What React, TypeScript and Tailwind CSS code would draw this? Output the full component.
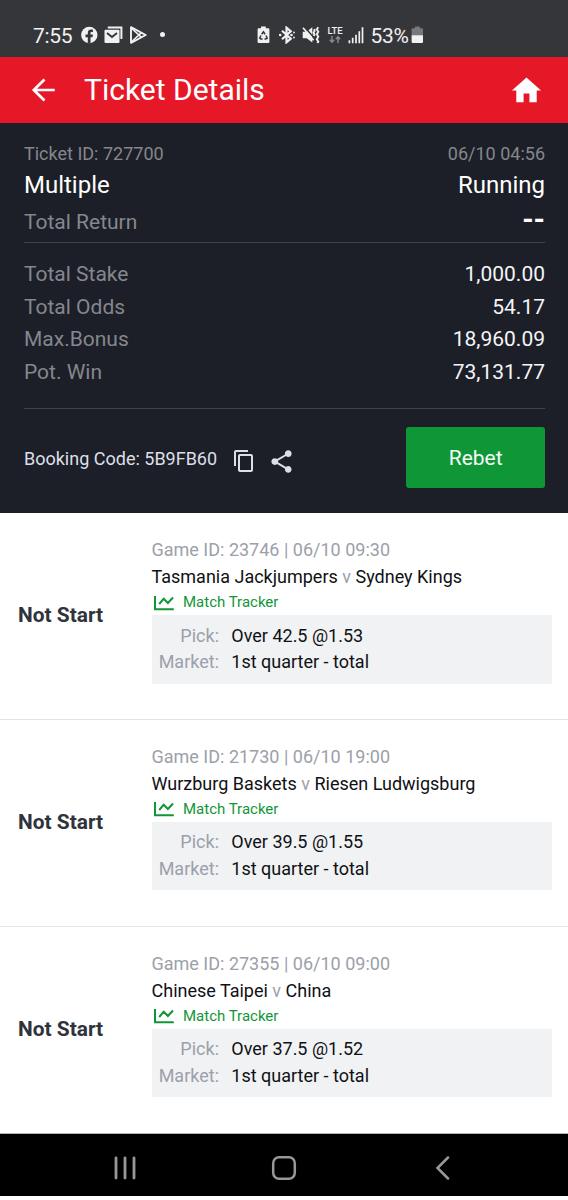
import React from "react";

type Game = {
  id: string;
  time: string;
  home: string;
  away: string;
  pick: string;
  market: string;
};

const games: Game[] = [
  { id: "23746", time: "06/10 09:30", home: "Tasmania Jackjumpers", away: "Sydney Kings", pick: "Over 42.5 @1.53", market: "1st quarter - total" },
  { id: "21730", time: "06/10 19:00", home: "Wurzburg Baskets", away: "Riesen Ludwigsburg", pick: "Over 39.5 @1.55", market: "1st quarter - total" },
  { id: "27355", time: "06/10 09:00", home: "Chinese Taipei", away: "China", pick: "Over 37.5 @1.52", market: "1st quarter - total" },
];

const totals = [
  ["Total Stake", "1,000.00"],
  ["Total Odds", "54.17"],
  ["Max.Bonus", "18,960.09"],
  ["Pot. Win", "73,131.77"],
];

function StatusBar() {
  return (
    <div className="flex h-[57px] items-end bg-[#353639] pb-[9px] pl-[33px] text-[21px] leading-[24px] text-[#f1f1f2]">
      <span className="w-[48px] tracking-[-0.3px]">7:55</span>
      <svg className="my-[4px] h-[18px] w-[17px] shrink-0" viewBox="0 0 17 18">
        <circle cx="8.3" cy="9" r="8.2" fill="#f1f1f2" />
        <path d="M6.8 17.2V11.300H4.500V8.600h2.300V6.900C6.800 4.600 8.100 3.500 10 3.500h1.900v2.500h-1.200c-.9 0-1.200.5-1.200 1.100v1.500h2.400l-.4 2.700H9.500v5.900z" fill="#353639" />
      </svg>
      <svg className="my-[4px] ml-[6px] h-[18px] w-[19px] shrink-0" viewBox="0 0 19 18">
        <path d="M3.800 1.500h13.600v11.400" fill="none" stroke="#f1f1f2" strokeWidth="2" />
        <rect x=".5" y="3.800" width="15" height="13.200" rx="1" fill="#f1f1f2" />
        <path d="M3 7l5 4 5-4" fill="none" stroke="#353639" strokeWidth="1.900" />
      </svg>
      <svg className="my-[4px] ml-[7px] h-[18px] w-[17px] shrink-0" viewBox="0 0 17 18">
        <path d="M1 1.200v15.600L15.700 9z" fill="none" stroke="#f1f1f2" strokeWidth="1.900" strokeLinejoin="round" />
        <path d="M1.300 2l10.200 9.400M1.300 16l10.200-9.400" fill="none" stroke="#f1f1f2" strokeWidth="1.600" />
      </svg>
      <span className="mb-[11px] ml-[13px] size-[5px] rounded-full bg-[#f1f1f2]" />
      <svg className="my-[4px] ml-[92px] h-[18px] w-[13px] shrink-0" viewBox="0 0 13 18">
        <path d="M1.500 2.300H4V.6h4.800v1.700h2.500q1.100 0 1.100 1.100v12.600q0 1.100-1.100 1.100h-9.600Q.6 17.100.6 16V3.400q0-1.100.9-1.100z" fill="#f1f1f2" />
        <path d="M4.700 8.200L6.400 5.800l1.700 2.400M9 9.500l1.200 2.600-1.500.9H7.500M5.600 13H3.800l-1.100-.9L4 9.500" fill="none" stroke="#353639" strokeWidth="1.500" />
      </svg>
      <svg className="my-[4px] ml-[8px] h-[18px] w-[18px] shrink-0" viewBox="0 0 18 18">
        <path d="M4 4.700l8.800 8L8.500 16.300V1.700l4.300 3.600L4 13.300" fill="none" stroke="#f1f1f2" strokeWidth="2.200" />
        <circle cx="2.200" cy="9" r="1.300" fill="#f1f1f2" />
        <circle cx="13.500" cy="9" r="1.300" fill="#f1f1f2" />
        <circle cx="16" cy="6.500" r=".9" fill="#f1f1f2" />
        <circle cx="16" cy="11.500" r=".9" fill="#f1f1f2" />
      </svg>
      <svg className="my-[4px] ml-[6px] h-[18px] w-[18px] shrink-0" viewBox="0 0 18 18">
        <path d="M.7 5.800h4L10.300 1.300v15.200l-5.600-4.300h-4z" fill="#f1f1f2" />
        <path d="M2 .2l11 12.700" stroke="#353639" strokeWidth="1.500" />
        <path d="M1 1.800l10.600 12.500" stroke="#f1f1f2" strokeWidth="1.700" />
        <path d="M12.500 3v2.200l-1 1.600 1 1.700-.7 1.500M16.300 1.200l-1.500 2 1.500 2.500-1.500 2.500 1.500 2.500-1.500 2.500 1.500 2.500-1 1.300" fill="none" stroke="#f1f1f2" strokeWidth="1.900" />
      </svg>
      <span className="ml-[6px] flex h-[26px] w-[18px] flex-col items-center pt-[4px]">
        <span className="text-[9.500px] font-medium leading-[9px]">LTE</span>
        <svg className="h-[9px] w-[12px]" viewBox="0 0 12 9">
          <path d="M3 1v6M.8 4.800L3 7.200l2.200-2.400M9 8V2M6.800 4.200L9 1.800l2.200 2.400" fill="none" stroke="#8b8c8e" strokeWidth="1.400" />
        </svg>
      </span>
      <svg className="my-[4px] ml-[4px] h-[18px] w-[16px] shrink-0" viewBox="0 0 16 18">
        <path d="M1.400 14.200v3M4.700 11.700v5.500M8 8.700v8.500M11.300 5.200v12M14.500 1.200v16" stroke="#f1f1f2" strokeWidth="1.700" />
      </svg>
      <span className="ml-[6.500px] w-[40px] tracking-[-0.300px]">53%</span>
      <svg className="my-[4px] h-[18px] w-[13px] shrink-0" viewBox="0 0 13 18">
        <path d="M1.500 2.300H4V.5h4.800v1.800h2q1.200 0 1.200 1.200v6.200H.6V3.300q0-1 .9-1z" fill="#77787a" />
        <path d="M.6 9.200H12v6.800q0 1-1 1H1.600q-1 0-1-1z" fill="#f1f1f2" />
      </svg>
    </div>
  );
}

function GameRow({ game, last }: { game: Game; last: boolean }) {
  return (
    <section className={`flex h-[206.8px] shrink-0 pr-[16.500px] text-[18px] ${last ? "" : "border-b border-[#e3e4e6]"}`}>
      <div className="flex h-[206px] w-[151.500px] shrink-0 items-center pl-[18px] text-[20.900px] font-bold text-[#30333c]">
        Not Start
      </div>
      <div className="min-w-0 flex-1 whitespace-nowrap pt-[23px]">
        <div className="h-[27px] leading-[27px] text-[#9ca0aa]">
          Game ID: {game.id} | {game.time}
        </div>
        <div className="h-[27px] leading-[27px] text-[#101114]">
          {game.home} <span className="text-[#9ca0aa]">v</span> {game.away}
        </div>
        <div className="flex h-[25px] items-center text-[15px] leading-[25px] text-[#0f9737]">
          <svg className="ml-[2px] mr-[9.500px] h-[16px] w-[20px]" viewBox="0 0 20 16" fill="none" stroke="currentColor" strokeWidth="2">
            <path d="M1 1v13.300h18.800M5.200 9l4.500-5.300 4.200 4.300L19 2.500" />
          </svg>
          Match Tracker
        </div>
        <div className="h-[68.500px] bg-[#f1f2f4] pt-[6.500px] text-[#101114]">
          {[["Pick:", game.pick], ["Market:", game.market]].map(([label, value]) => (
            <div key={label} className="flex h-[26.700px] leading-[27px]">
              <span className="w-[67.500px] text-right text-[#9ca0aa]">{label}</span>
              <span className="ml-[12.300px]">{value}</span>
            </div>
          ))}
        </div>
      </div>
    </section>
  );
}

export default function App() {
  return (
    <main className="flex h-[1200px] w-[568px] flex-col overflow-hidden bg-white font-['Roboto',sans-serif]">
      <StatusBar />
      <header className="flex h-[66px] items-center bg-[#e61827] pl-[31px] pr-[24px] text-white">
        <svg className="h-[24px] w-[25px]" viewBox="0 0 25 24" fill="none" stroke="currentColor" strokeWidth="2.700">
          <path d="M23.700 12H2.500M13.500 1.500L2.800 12l10.700 10.500" />
        </svg>
        <h1 className="ml-[28px] flex-1 text-[30px] leading-[36px]">Ticket Details</h1>
        <svg className="size-[35px]" viewBox="0 0 24 24" fill="currentColor">
          <path d="M10 20v-6h4v6h5v-8h3L12 3 2 12h3v8z" />
        </svg>
      </header>
      <section className="h-[390px] bg-[#1c1f27] px-[24px] pr-[23px] text-[#84878d]">
        <div className="flex h-[46px] items-end justify-between text-[18px] leading-[30px]">
          <span>Ticket ID: 727700</span>
          <span>06/10 04:56</span>
        </div>
        <div className="flex h-[32px] justify-between text-[24px] leading-[32px] text-white">
          <span>Multiple</span>
          <span>Running</span>
        </div>
        <div className="flex h-[42px] justify-between border-b border-[#40434a] text-[21px] leading-[42px]">
          <span>Total Return</span>
          <span className="text-[29px] font-bold leading-[37px] text-white">--</span>
        </div>
        <div className="h-[166px] border-b border-[#40434a] pt-[15px]">
          {totals.map(([label, value]) => (
            <div key={label} className="flex h-[32.600px] justify-between text-[21px] leading-[33px]">
              <span>{label}</span>
              <span className="text-[#f4f5f7]">{value}</span>
            </div>
          ))}
        </div>
        <div className="flex pt-[18px] text-[#dcdfe8]">
          <span className="w-[208px] text-[18px] leading-[64px]">Booking Code: 5B9FB60</span>
          <svg className="mt-[22px] size-[24px]" viewBox="0 0 24 24" fill="currentColor">
            <path d="M16 1H4c-1.100 0-2 .9-2 2v14h2V3h12V1zm3 4H8c-1.100 0-2 .9-2 2v14c0 1.100.9 2 2 2h11c1.100 0 2-.9 2-2V7c0-1.100-.9-2-2-2zm0 16H8V7h11v14z" />
          </svg>
          <svg className="ml-[11.500px] mt-[21px] size-[27px]" viewBox="0 0 24 24" fill="currentColor">
            <path d="M18 16.080c-.76 0-1.440.3-1.960.77L8.910 12.700c.05-.23.09-.46.09-.7s-.04-.47-.09-.7l7.050-4.110c.54.5 1.250.81 2.040.81 1.660 0 3-1.340 3-3s-1.340-3-3-3-3 1.340-3 3c0 .24.04.47.09.7L8.040 9.810C7.500 9.310 6.790 9 6 9c-1.660 0-3 1.340-3 3s1.340 3 3 3c.79 0 1.500-.31 2.040-.81l7.120 4.160c-.05.21-.08.43-.08.65 0 1.610 1.310 2.920 2.920 2.920 1.610 0 2.920-1.310 2.920-2.920s-1.310-2.920-2.920-2.920z" />
          </svg>
          <button className="ml-auto h-[61px] w-[138.700px] rounded-[3px] bg-[#0f9737] text-[21px] leading-[32px] text-[#f4fbf6]">Rebet</button>
        </div>
      </section>
      <div className="flex h-[621px] shrink-0 flex-col overflow-hidden border-b border-[#b4b5b6]">
        {games.map((game, i) => (
          <GameRow key={game.id} game={game} last={i === games.length - 1} />
        ))}
      </div>
      <nav className="flex h-[62px] items-center justify-between bg-black px-[112.500px] pt-[5px] text-[#98989a]">
        <svg className="size-[24px]" viewBox="0 0 24 24" stroke="currentColor" strokeWidth="2.800" strokeLinecap="round">
          <path d="M3 2v20M12 2v20M21 2v20" />
        </svg>
        <svg className="size-[26px]" viewBox="0 0 26 26" fill="none" stroke="currentColor" strokeWidth="2.500">
          <rect x="2.200" y="2.200" width="21.600" height="21.600" rx="6" />
        </svg>
        <svg className="size-[24px]" viewBox="0 0 24 24" fill="none" stroke="currentColor" strokeWidth="2.500" strokeLinecap="round">
          <path d="M16 1.500L5.500 12 16 22.500" />
        </svg>
      </nav>
    </main>
  );
}
